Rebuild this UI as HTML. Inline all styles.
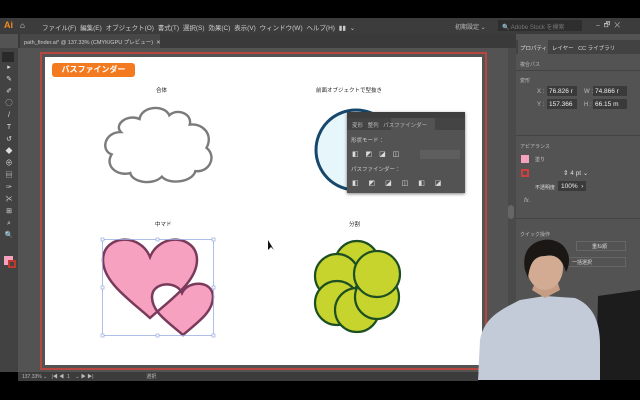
<!DOCTYPE html>
<html><head><meta charset="utf-8"><style>
*{margin:0;padding:0;box-sizing:border-box}
body{width:640px;height:400px;background:#000;position:relative;overflow:hidden;font-family:"Liberation Sans","Noto Sans CJK JP",sans-serif;color:#ccc}
.a{position:absolute}
.t{font-size:6px;white-space:nowrap}
</style></head><body>
<div class="a" style="left:0;top:0;width:640px;height:18px;background:#000"></div>
<div class="a" style="left:0;top:18px;width:640px;height:16px;background:#3c3c3c"></div>
<div class="a t" style="left:4px;top:20px;font-size:9px;color:#f08a24;font-weight:bold">Ai</div>
<div class="a t" style="left:20px;top:21px;font-size:8px;color:#ddd">⌂</div>
<div class="a t" style="left:42px;top:22px;font-size:6.5px;color:#ccc;word-spacing:2px">ファイル(F) 編集(E) オブジェクト(O) 書式(T) 選択(S) 効果(C) 表示(V) ウィンドウ(W) ヘルプ(H) ▮▮ ⌄</div>
<div class="a t" style="left:455px;top:22px;color:#bbb">初期設定 ⌄</div>
<div class="a" style="left:498px;top:20px;width:84px;height:11px;background:#2e2e2e"></div>
<div class="a t" style="left:502px;top:22px;color:#777">🔍 Adobe Stock を検索</div>
<div class="a t" style="left:596px;top:21px;color:#bbb;font-size:7px">–&nbsp;&nbsp;🗗&nbsp;&nbsp;✕</div>
<div class="a" style="left:0;top:34px;width:640px;height:338px;background:#535353"></div>
<div class="a" style="left:18px;top:34px;width:498px;height:14px;background:#3a3a3a"></div>
<div class="a" style="left:20px;top:34px;width:140px;height:14px;background:#474747"></div>
<div class="a t" style="left:24px;top:38px;color:#ccc;font-size:5.5px">path_finder.ai* @ 137.33% (CMYK/GPU プレビュー) &nbsp;✕</div>
<div class="a" style="left:0;top:48px;width:18px;height:324px;background:#424242"></div>
<div class="a" style="left:2px;top:52px;width:12px;height:10px;background:#2a2a2a"></div>
<div class="a" style="left:4px;top:62px;width:10px;font-size:7px;line-height:12px;color:#ddd;text-align:center">▸<br>✎<br>✐<br>◯<br>/<br>T<br>↺<br>◆<br>⊕<br>▤<br>✑<br>✂<br>⊞<br>⌕<br>🔍</div>
<div class="a" style="left:4px;top:256px;width:9px;height:9px;background:#f7a1c0"></div>
<div class="a" style="left:8px;top:260px;width:8px;height:8px;border:2px solid #c0392b;background:#444"></div>
<div class="a" style="left:40px;top:52px;width:447px;height:318px;border:2px solid #b5473f"></div>
<div class="a" style="left:45px;top:57px;width:437px;height:308px;background:#fff"></div>
<div class="a" style="left:508px;top:48px;width:8px;height:324px;background:#4a4a4a"></div>
<div class="a" style="left:508px;top:205px;width:6px;height:14px;background:#666;border-radius:3px"></div>
<div class="a" style="left:52px;top:63px;width:83px;height:14px;background:#f47a20;border-radius:3px;color:#fff;font-size:8px;font-weight:bold;line-height:14px;text-align:center">パスファインダー</div>
<div class="a t" style="left:156px;top:86px;color:#222;font-size:5.5px">合体</div>
<div class="a t" style="left:316px;top:86px;color:#222;font-size:5.5px">前面オブジェクトで型抜き</div>
<div class="a t" style="left:155px;top:220px;color:#222;font-size:5.5px">中マド</div>
<div class="a t" style="left:349px;top:220px;color:#222;font-size:5.5px">分割</div>
<svg class="a" style="left:0;top:0" width="640" height="400">
<path transform="translate(160,146) scale(0.93) translate(-160,-143)" d="M118,128 C110,120 125,108 138,114 C140,100 165,98 170,110 C178,102 195,108 192,120 C205,118 218,130 210,145 C222,155 212,172 198,170 C195,182 170,185 162,176 C152,186 130,182 128,172 C115,176 100,165 108,152 C96,148 100,128 118,128 Z" fill="#fff" stroke="#7b7b7b" stroke-width="2.6"/>
<circle cx="356" cy="150" r="40" fill="#e6f6fb" stroke="#17486b" stroke-width="3"/>
<path fill-rule="evenodd" d="M150,257 C140,232 103,235 103,260 C103,282 130,300 150,318 C170,300 197,282 197,260 C197,235 160,232 150,257 Z M182,293 C176,280 152,282 152,297 C152,312 168,322 183,335 C198,322 213,312 213,297 C213,280 188,280 182,293 Z" fill="#f7a1c0" stroke="#7a3a5c" stroke-width="2.5"/>
<rect x="102.5" y="239.5" width="111" height="96" fill="none" stroke="#9aaee0" stroke-width="0.8"/>
<g fill="#fff" stroke="#9aaee0" stroke-width="0.7"><rect x="101" y="238" width="3" height="3"/><rect x="156" y="238" width="3" height="3"/><rect x="212" y="238" width="3" height="3"/><rect x="101" y="286" width="3" height="3"/><rect x="212" y="286" width="3" height="3"/><rect x="101" y="334" width="3" height="3"/><rect x="156" y="334" width="3" height="3"/><rect x="212" y="334" width="3" height="3"/></g>
<g fill="#c8d42e" stroke="#1d4f22" stroke-width="2.2">
<circle cx="357" cy="263" r="22"/><circle cx="337" cy="276" r="22"/><circle cx="337" cy="303" r="22"/><circle cx="357" cy="310" r="22"/><circle cx="377" cy="297" r="22"/><circle cx="377" cy="274" r="23"/>
</g>
<path d="M268,240 L268,250 L271,247 L274,250 Z" fill="#111"/>
</svg>
<div class="a" style="left:347px;top:112px;width:118px;height:81px;background:#535353;box-shadow:0 1px 3px rgba(0,0,0,.5)"></div>
<div class="a" style="left:347px;top:112px;width:118px;height:6px;background:#3e3e3e"></div>
<div class="a" style="left:347px;top:118px;width:118px;height:12px;background:#444"></div>
<div class="a" style="left:391px;top:118px;width:44px;height:12px;background:#535353"></div>
<div class="a t" style="left:352px;top:121px;color:#bbb;font-size:5.5px">変形&nbsp;&nbsp;&nbsp;整列&nbsp;&nbsp;&nbsp;パスファインダー</div>
<div class="a t" style="left:351px;top:136px;color:#ccc;font-size:5.5px">形状モード：</div>
<div class="a t" style="left:352px;top:150px;color:#ddd;font-size:7px;word-spacing:5px">◧ ◩ ◪ ◫</div>
<div class="a" style="left:420px;top:150px;width:40px;height:9px;background:#5e5e5e"></div>
<div class="a t" style="left:351px;top:165px;color:#ccc;font-size:5.5px">パスファインダー：</div>
<div class="a t" style="left:352px;top:179px;color:#ddd;font-size:7px;word-spacing:8px">◧ ◩ ◪ ◫ ◧ ◪</div>
<div class="a" style="left:516px;top:34px;width:124px;height:338px;background:#535353"></div>
<div class="a" style="left:516px;top:40px;width:124px;height:14px;background:#424242"></div>
<div class="a" style="left:518px;top:40px;width:30px;height:14px;background:#535353"></div>
<div class="a t" style="left:520px;top:44px;color:#ddd;font-size:5.5px">プロパティ&nbsp;&nbsp;&nbsp;レイヤー&nbsp;&nbsp;&nbsp;CC ライブラリ</div>
<div class="a t" style="left:520px;top:61px;color:#bbb;font-size:5px">複合パス</div>
<div class="a" style="left:516px;top:70px;width:124px;height:1px;background:#444"></div>
<div class="a t" style="left:520px;top:77px;color:#bbb;font-size:5px">変形</div>
<div class="a t" style="left:537px;top:89px;color:#bbb;font-size:6px">X :</div>
<div class="a" style="left:547px;top:86px;width:30px;height:10px;background:#3a3a3a"></div>
<div class="a t" style="left:549px;top:88px;color:#eee;font-size:6.5px">76.826 r</div>
<div class="a t" style="left:584px;top:89px;color:#bbb;font-size:6px">W :</div>
<div class="a" style="left:593px;top:86px;width:34px;height:10px;background:#3a3a3a"></div>
<div class="a t" style="left:595px;top:88px;color:#eee;font-size:6.5px">74.866 r</div>
<div class="a t" style="left:537px;top:102px;color:#bbb;font-size:6px">Y :</div>
<div class="a" style="left:547px;top:99px;width:30px;height:10px;background:#3a3a3a"></div>
<div class="a t" style="left:549px;top:101px;color:#eee;font-size:6.5px">157.366</div>
<div class="a t" style="left:584px;top:102px;color:#bbb;font-size:6px">H :</div>
<div class="a" style="left:593px;top:99px;width:34px;height:10px;background:#3a3a3a"></div>
<div class="a t" style="left:595px;top:101px;color:#eee;font-size:6.5px">66.15 m</div>
<div class="a" style="left:516px;top:135px;width:124px;height:1px;background:#444"></div>
<div class="a t" style="left:520px;top:143px;color:#bbb;font-size:5px">アピアランス</div>
<div class="a" style="left:521px;top:155px;width:8px;height:8px;background:#f7a1c0"></div>
<div class="a t" style="left:535px;top:156px;color:#ccc;font-size:5px">塗り</div>
<div class="a" style="left:521px;top:169px;width:8px;height:8px;border:2px solid #d04040"></div>
<div class="a t" style="left:563px;top:169px;color:#ddd;font-size:6.5px">⇕ 4 pt ⌄</div>
<div class="a t" style="left:535px;top:184px;color:#ddd;font-size:5px">不透明度</div>
<div class="a" style="left:558px;top:181px;width:28px;height:10px;background:#3a3a3a"></div>
<div class="a t" style="left:561px;top:183px;color:#eee;font-size:6.5px">100% &nbsp;›</div>
<div class="a t" style="left:524px;top:198px;color:#bbb;font-size:6px;font-style:italic">fx.</div>
<div class="a" style="left:516px;top:218px;width:124px;height:1px;background:#444"></div>
<div class="a t" style="left:520px;top:231px;color:#bbb;font-size:5px">クイック操作</div>
<div class="a" style="left:576px;top:241px;width:50px;height:10px;border:1px solid #666"></div>
<div class="a t" style="left:592px;top:243px;color:#ddd;font-size:5px">重ね順</div>
<div class="a" style="left:560px;top:257px;width:66px;height:10px;border:1px solid #666"></div>
<div class="a t" style="left:572px;top:259px;color:#ddd;font-size:5px">一括選択</div>
<svg class="a" style="left:0;top:0" width="640" height="400">
<path d="M598,296 L640,290 L640,380 L596,380 Z" fill="#1c1c1c"/>
<path d="M478,380 L480,340 C484,318 500,310 520,300 L545,296 L575,298 C592,305 600,320 600,345 L600,380 Z" fill="#c3cbd8"/>
<path d="M532,290 L545,298 L560,290 L558,283 L535,283 Z" fill="#c59d84"/>
<ellipse cx="545" cy="268" rx="18" ry="22" fill="#d2ab92"/>
<path d="M525,270 C520,245 540,238 552,240 C570,244 572,262 566,272 C562,258 555,254 545,256 C535,256 530,262 528,278 Z" fill="#1b1714"/>
</svg>
<div class="a" style="left:18px;top:372px;width:460px;height:9px;background:#3c3c3c"></div>
<div class="a t" style="left:22px;top:373px;color:#bbb;font-size:5px">137.33% ⌄ &nbsp;&nbsp;|◀ ◀ &nbsp;1 &nbsp;&nbsp;&nbsp;⌄ ▶ ▶| &nbsp;&nbsp;&nbsp;&nbsp;&nbsp;&nbsp;&nbsp;&nbsp;&nbsp;&nbsp;&nbsp;&nbsp;&nbsp;&nbsp;&nbsp;&nbsp;&nbsp;&nbsp;&nbsp;&nbsp;&nbsp;&nbsp;&nbsp;&nbsp;&nbsp;&nbsp;&nbsp;&nbsp;&nbsp;&nbsp;&nbsp;&nbsp;&nbsp;&nbsp;&nbsp;&nbsp; 選択</div>
<div class="a" style="left:0;top:381px;width:640px;height:19px;background:#000"></div>
</body></html>
